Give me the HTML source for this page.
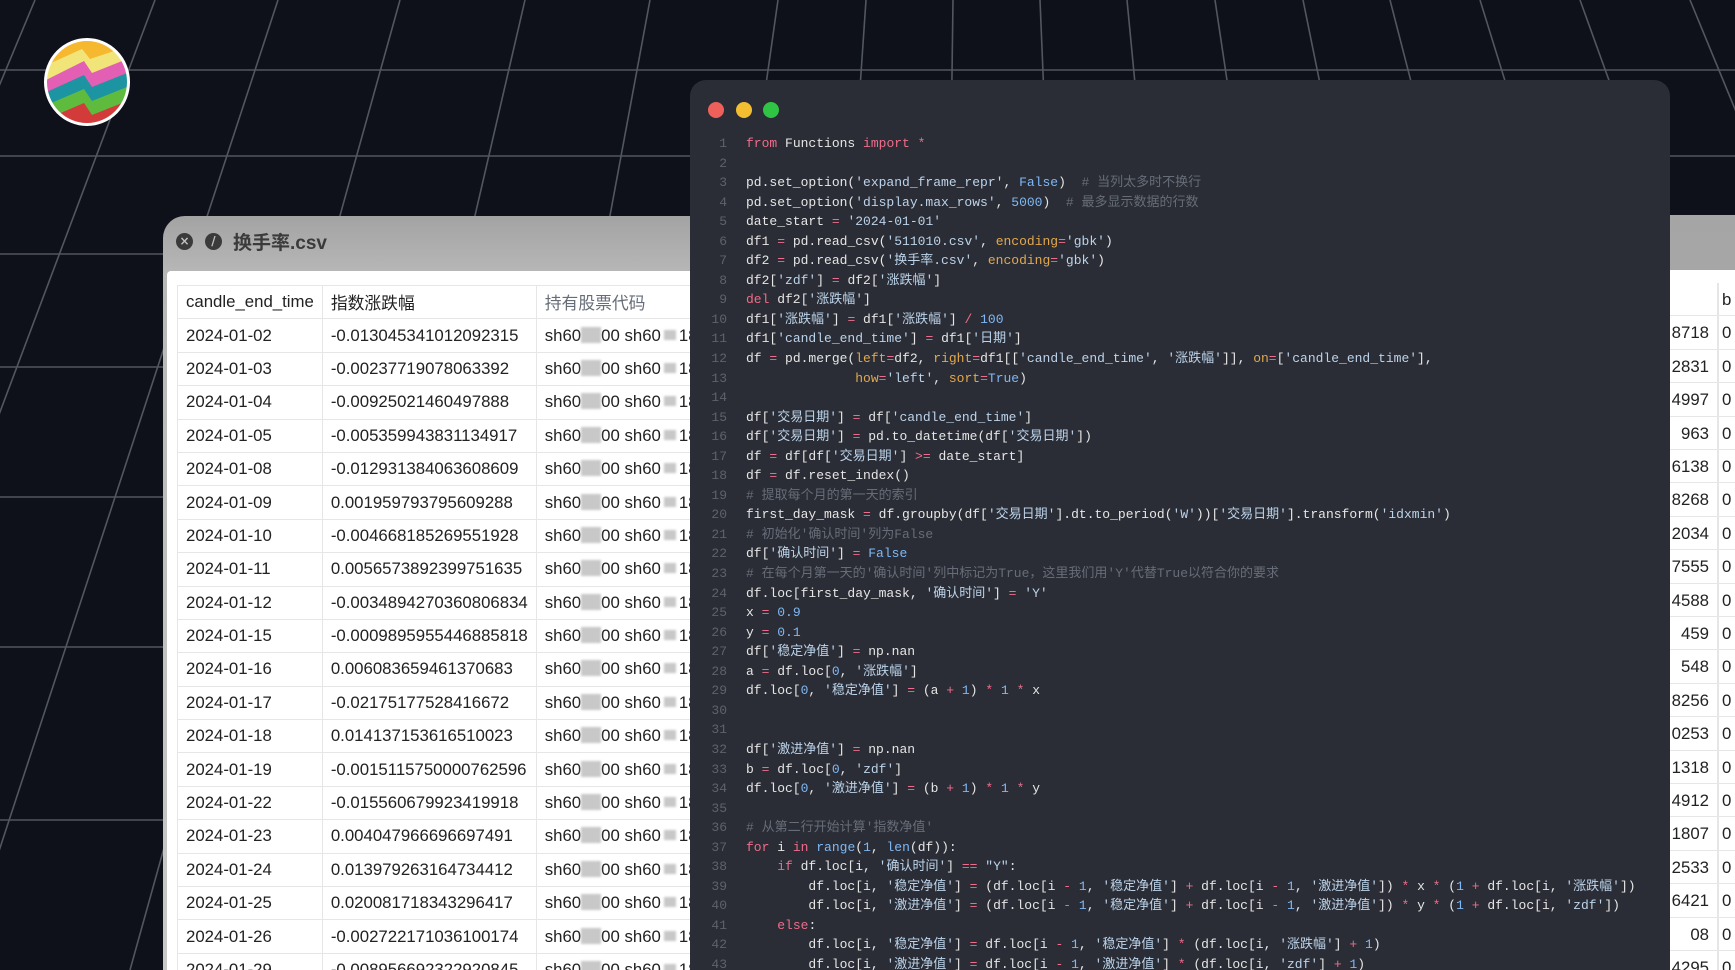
<!DOCTYPE html>
<html><head><meta charset="utf-8"><style>
*{margin:0;padding:0;box-sizing:border-box}
html,body{width:1735px;height:970px;overflow:hidden;background:#0e1119}
body{position:relative}
#bg{position:absolute;left:0;top:0}
.logo{position:absolute;left:42px;top:37px}
.csv{position:absolute;left:163px;top:216px;width:1600px;height:754px;border-radius:22px 0 0 0;background:linear-gradient(#a3a3a3,#b8b8b8 60px,#c8c8c8);overflow:hidden}
.csv .title{position:absolute;left:70px;top:12px;font:bold 19px "Liberation Sans","Noto Sans CJK SC",sans-serif;color:#3b3b3b}
.ic{position:absolute;top:17px;width:17px;height:17px;border-radius:50%;background:#3a3a3a;color:#c0c0c0;font:bold 12px/17px "DejaVu Sans",sans-serif;text-align:center}
.panel{position:absolute;left:4px;top:55px;right:0;bottom:0;background:#fff;border-radius:4px 0 0 0;overflow:hidden}
table{position:absolute;left:10px;top:14px;border-collapse:collapse;font:16.8px "Liberation Sans","Noto Sans CJK SC",sans-serif;color:#222}
td{border:1.5px solid #e6e6e6;height:33.4px;padding:0 8px;white-space:nowrap;color:#222}
td.a{width:120px}td.b{width:200px}td.c{width:400px}
.bl{display:inline-block;width:20px;height:16px;background:#c8c8c8;vertical-align:-2px;filter:blur(1px)}
.bs{display:inline-block;width:12px;height:10px;background:#c8c8c8;vertical-align:1px;margin:0 3px;filter:blur(1px)}
.rt{position:absolute;left:1669px;top:215px;width:66px;height:755px;background:linear-gradient(#a5a5a5,#b5b5b5);overflow:hidden}
.rt .p{position:absolute;left:0;top:55px;right:0;bottom:0;background:#fff}
.rt .row{position:absolute;left:0;width:80px;height:33.4px;border-bottom:1.5px solid #e6e6e6;font:16.8px "Liberation Sans",sans-serif;color:#222;line-height:33px}
.rt .v{position:absolute;right:40px}
.rt .z{position:absolute;left:53px}
.rt .ln{position:absolute;left:48px;top:13px;width:1.5px;height:760px;background:#e6e6e6}
.code{position:absolute;left:690px;top:80px;width:980px;height:890px;background:#2a2d35;border-radius:16px 16px 0 0;overflow:hidden}
.dot{position:absolute;top:22px;width:16px;height:16px;border-radius:50%}
pre{position:absolute;left:0;top:54px;font:13px/19.55px "Liberation Mono","Noto Sans CJK SC",monospace;color:#e6e6e6}
.nm{display:inline-block;width:37px;text-align:right;color:#5d626c;margin-right:19px}
.k{color:#ee6d8a}.s{color:#bcd3ea}.n{color:#7fb8f5}.c{color:#676d78}.p{color:#e3a84c}.o{color:#ee6d8a}
</style></head><body>
<svg id="bg" width="1735" height="970">
<g stroke="#5a5e66" stroke-width="1.6" opacity="0.9">
<line x1="0" y1="70" x2="1735" y2="70"/><line x1="0" y1="156" x2="1735" y2="156"/><line x1="0" y1="254" x2="1735" y2="254"/><line x1="0" y1="367" x2="1735" y2="367"/><line x1="0" y1="497" x2="1735" y2="497"/><line x1="0" y1="647" x2="1735" y2="647"/><line x1="0" y1="820" x2="1735" y2="820"/>
<line x1="35" y1="0" x2="-370" y2="970"/><line x1="155" y1="0" x2="-210" y2="970"/><line x1="278" y1="0" x2="-40" y2="970"/><line x1="400" y1="0" x2="130" y2="970"/><line x1="525" y1="0" x2="300" y2="970"/><line x1="650" y1="0" x2="470" y2="970"/><line x1="778" y1="0" x2="640" y2="970"/><line x1="866" y1="0" x2="800" y2="970"/><line x1="953" y1="0" x2="940" y2="970"/><line x1="1040" y1="0" x2="1080" y2="970"/><line x1="1127" y1="0" x2="1220" y2="970"/><line x1="1215" y1="0" x2="1360" y2="970"/><line x1="1303" y1="0" x2="1500" y2="970"/><line x1="1390" y1="0" x2="1640" y2="970"/><line x1="1480" y1="0" x2="1780" y2="970"/><line x1="1580" y1="0" x2="1930" y2="970"/><line x1="1690" y1="0" x2="2090" y2="970"/>
</g></svg>
<svg class="logo" width="90" height="90" viewBox="0 0 90 90">
<defs><clipPath id="cc"><ellipse cx="45" cy="45" rx="41" ry="42"/></clipPath></defs>
<g clip-path="url(#cc)">
<rect width="90" height="90" fill="#f5b82e"/>
<polygon points="0,30 40,12 48,22 90,8 90,90 0,90" fill="#f1e57a"/>
<polygon points="0,45 42,24 50,36 90,20 90,90 0,90" fill="#e35fb4"/>
<polygon points="0,57 42,38 50,50 90,34 90,90 0,90" fill="#1d94a2"/>
<polygon points="0,70 42,52 50,64 90,48 90,90 0,90" fill="#5fbb3e"/>
<polygon points="0,84 42,66 50,78 90,62 90,90 0,90" fill="#d33a3a"/>
</g>
<ellipse cx="45" cy="45" rx="41.5" ry="42.5" fill="none" stroke="#fff" stroke-width="3"/>
</svg>
<div class="csv">
<div class="ic" style="left:13px">×</div><div class="ic" style="left:42px">/</div>
<div class="title">换手率.csv</div>
<div class="panel">
<table>
<tr><td class="a">candle_end_time</td><td class="b">指数涨跌幅</td><td class="c">持有股票代码</td></tr>
<tr><td>2024-01-02</td><td>-0.013045341012092315</td><td>sh60<span class="bl"></span>00 sh60<span class="bs"></span>18</td></tr>
<tr><td>2024-01-03</td><td>-0.00237719078063392</td><td>sh60<span class="bl"></span>00 sh60<span class="bs"></span>18</td></tr>
<tr><td>2024-01-04</td><td>-0.00925021460497888</td><td>sh60<span class="bl"></span>00 sh60<span class="bs"></span>18</td></tr>
<tr><td>2024-01-05</td><td>-0.005359943831134917</td><td>sh60<span class="bl"></span>00 sh60<span class="bs"></span>18</td></tr>
<tr><td>2024-01-08</td><td>-0.012931384063608609</td><td>sh60<span class="bl"></span>00 sh60<span class="bs"></span>18</td></tr>
<tr><td>2024-01-09</td><td>0.001959793795609288</td><td>sh60<span class="bl"></span>00 sh60<span class="bs"></span>18</td></tr>
<tr><td>2024-01-10</td><td>-0.004668185269551928</td><td>sh60<span class="bl"></span>00 sh60<span class="bs"></span>18</td></tr>
<tr><td>2024-01-11</td><td>0.0056573892399751635</td><td>sh60<span class="bl"></span>00 sh60<span class="bs"></span>18</td></tr>
<tr><td>2024-01-12</td><td>-0.0034894270360806834</td><td>sh60<span class="bl"></span>00 sh60<span class="bs"></span>18</td></tr>
<tr><td>2024-01-15</td><td>-0.0009895955446885818</td><td>sh60<span class="bl"></span>00 sh60<span class="bs"></span>18</td></tr>
<tr><td>2024-01-16</td><td>0.006083659461370683</td><td>sh60<span class="bl"></span>00 sh60<span class="bs"></span>18</td></tr>
<tr><td>2024-01-17</td><td>-0.02175177528416672</td><td>sh60<span class="bl"></span>00 sh60<span class="bs"></span>18</td></tr>
<tr><td>2024-01-18</td><td>0.014137153616510023</td><td>sh60<span class="bl"></span>00 sh60<span class="bs"></span>18</td></tr>
<tr><td>2024-01-19</td><td>-0.0015115750000762596</td><td>sh60<span class="bl"></span>00 sh60<span class="bs"></span>18</td></tr>
<tr><td>2024-01-22</td><td>-0.015560679923419918</td><td>sh60<span class="bl"></span>00 sh60<span class="bs"></span>18</td></tr>
<tr><td>2024-01-23</td><td>0.004047966696697491</td><td>sh60<span class="bl"></span>00 sh60<span class="bs"></span>18</td></tr>
<tr><td>2024-01-24</td><td>0.013979263164734412</td><td>sh60<span class="bl"></span>00 sh60<span class="bs"></span>18</td></tr>
<tr><td>2024-01-25</td><td>0.020081718343296417</td><td>sh60<span class="bl"></span>00 sh60<span class="bs"></span>18</td></tr>
<tr><td>2024-01-26</td><td>-0.002722171036100174</td><td>sh60<span class="bl"></span>00 sh60<span class="bs"></span>18</td></tr>
<tr><td>2024-01-29</td><td>-0.008956692322920845</td><td>sh60<span class="bl"></span>00 sh60<span class="bs"></span>18</td></tr>
</table>
</div></div>
<div class="rt"><div class="p">
<div class="ln"></div>
<div class="row" style="top:13px"><span class="z">b</span></div>
<div class="row" style="top:46.4px"><span class="v">8718</span><span class="z">0</span></div>
<div class="row" style="top:79.8px"><span class="v">2831</span><span class="z">0</span></div>
<div class="row" style="top:113.2px"><span class="v">4997</span><span class="z">0</span></div>
<div class="row" style="top:146.6px"><span class="v">963</span><span class="z">0</span></div>
<div class="row" style="top:180px"><span class="v">6138</span><span class="z">0</span></div>
<div class="row" style="top:213.4px"><span class="v">8268</span><span class="z">0</span></div>
<div class="row" style="top:246.8px"><span class="v">2034</span><span class="z">0</span></div>
<div class="row" style="top:280.2px"><span class="v">7555</span><span class="z">0</span></div>
<div class="row" style="top:313.6px"><span class="v">4588</span><span class="z">0</span></div>
<div class="row" style="top:347px"><span class="v">459</span><span class="z">0</span></div>
<div class="row" style="top:380.4px"><span class="v">548</span><span class="z">0</span></div>
<div class="row" style="top:413.8px"><span class="v">8256</span><span class="z">0</span></div>
<div class="row" style="top:447.2px"><span class="v">0253</span><span class="z">0</span></div>
<div class="row" style="top:480.6px"><span class="v">1318</span><span class="z">0</span></div>
<div class="row" style="top:514px"><span class="v">4912</span><span class="z">0</span></div>
<div class="row" style="top:547.4px"><span class="v">1807</span><span class="z">0</span></div>
<div class="row" style="top:580.8px"><span class="v">2533</span><span class="z">0</span></div>
<div class="row" style="top:614.2px"><span class="v">6421</span><span class="z">0</span></div>
<div class="row" style="top:647.6px"><span class="v">08</span><span class="z">0</span></div>
<div class="row" style="top:681px"><span class="v">4295</span><span class="z">0</span></div>
</div></div>
<div class="code">
<div class="dot" style="left:18px;background:#f0605a"></div>
<div class="dot" style="left:46px;background:#f3be2f"></div>
<div class="dot" style="left:73px;background:#2fc443"></div>
<pre><span class="nm">1</span><span class="k">from</span> Functions <span class="k">import</span> <span class="o">*</span>
<span class="nm">2</span>
<span class="nm">3</span>pd.set_option(<span class="s">'expand_frame_repr'</span>, <span class="n">False</span>)  <span class="c"># 当列太多时不换行</span>
<span class="nm">4</span>pd.set_option(<span class="s">'display.max_rows'</span>, <span class="n">5000</span>)  <span class="c"># 最多显示数据的行数</span>
<span class="nm">5</span>date_start <span class="o">=</span> <span class="s">'2024-01-01'</span>
<span class="nm">6</span>df1 <span class="o">=</span> pd.read_csv(<span class="s">'511010.csv'</span>, <span class="p">encoding</span><span class="o">=</span><span class="s">'gbk'</span>)
<span class="nm">7</span>df2 <span class="o">=</span> pd.read_csv(<span class="s">'换手率.csv'</span>, <span class="p">encoding</span><span class="o">=</span><span class="s">'gbk'</span>)
<span class="nm">8</span>df2[<span class="s">'zdf'</span>] <span class="o">=</span> df2[<span class="s">'涨跌幅'</span>]
<span class="nm">9</span><span class="k">del</span> df2[<span class="s">'涨跌幅'</span>]
<span class="nm">10</span>df1[<span class="s">'涨跌幅'</span>] <span class="o">=</span> df1[<span class="s">'涨跌幅'</span>] <span class="o">/</span> <span class="n">100</span>
<span class="nm">11</span>df1[<span class="s">'candle_end_time'</span>] <span class="o">=</span> df1[<span class="s">'日期'</span>]
<span class="nm">12</span>df <span class="o">=</span> pd.merge(<span class="p">left</span><span class="o">=</span>df2, <span class="p">right</span><span class="o">=</span>df1[[<span class="s">'candle_end_time'</span>, <span class="s">'涨跌幅'</span>]], <span class="p">on</span><span class="o">=</span>[<span class="s">'candle_end_time'</span>],
<span class="nm">13</span>              <span class="p">how</span><span class="o">=</span><span class="s">'left'</span>, <span class="p">sort</span><span class="o">=</span><span class="n">True</span>)
<span class="nm">14</span>
<span class="nm">15</span>df[<span class="s">'交易日期'</span>] <span class="o">=</span> df[<span class="s">'candle_end_time'</span>]
<span class="nm">16</span>df[<span class="s">'交易日期'</span>] <span class="o">=</span> pd.to_datetime(df[<span class="s">'交易日期'</span>])
<span class="nm">17</span>df <span class="o">=</span> df[df[<span class="s">'交易日期'</span>] <span class="o">&gt;=</span> date_start]
<span class="nm">18</span>df <span class="o">=</span> df.reset_index()
<span class="nm">19</span><span class="c"># 提取每个月的第一天的索引</span>
<span class="nm">20</span>first_day_mask <span class="o">=</span> df.groupby(df[<span class="s">'交易日期'</span>].dt.to_period(<span class="s">'W'</span>))[<span class="s">'交易日期'</span>].transform(<span class="s">'idxmin'</span>)
<span class="nm">21</span><span class="c"># 初始化'确认时间'列为False</span>
<span class="nm">22</span>df[<span class="s">'确认时间'</span>] <span class="o">=</span> <span class="n">False</span>
<span class="nm">23</span><span class="c"># 在每个月第一天的'确认时间'列中标记为True，这里我们用'Y'代替True以符合你的要求</span>
<span class="nm">24</span>df.loc[first_day_mask, <span class="s">'确认时间'</span>] <span class="o">=</span> <span class="s">'Y'</span>
<span class="nm">25</span>x <span class="o">=</span> <span class="n">0.9</span>
<span class="nm">26</span>y <span class="o">=</span> <span class="n">0.1</span>
<span class="nm">27</span>df[<span class="s">'稳定净值'</span>] <span class="o">=</span> np.nan
<span class="nm">28</span>a <span class="o">=</span> df.loc[<span class="n">0</span>, <span class="s">'涨跌幅'</span>]
<span class="nm">29</span>df.loc[<span class="n">0</span>, <span class="s">'稳定净值'</span>] <span class="o">=</span> (a <span class="o">+</span> <span class="n">1</span>) <span class="o">*</span> <span class="n">1</span> <span class="o">*</span> x
<span class="nm">30</span>
<span class="nm">31</span>
<span class="nm">32</span>df[<span class="s">'激进净值'</span>] <span class="o">=</span> np.nan
<span class="nm">33</span>b <span class="o">=</span> df.loc[<span class="n">0</span>, <span class="s">'zdf'</span>]
<span class="nm">34</span>df.loc[<span class="n">0</span>, <span class="s">'激进净值'</span>] <span class="o">=</span> (b <span class="o">+</span> <span class="n">1</span>) <span class="o">*</span> <span class="n">1</span> <span class="o">*</span> y
<span class="nm">35</span>
<span class="nm">36</span><span class="c"># 从第二行开始计算'指数净值'</span>
<span class="nm">37</span><span class="k">for</span> i <span class="k">in</span> <span class="n">range</span>(<span class="n">1</span>, <span class="n">len</span>(df)):
<span class="nm">38</span>    <span class="k">if</span> df.loc[i, <span class="s">'确认时间'</span>] <span class="o">==</span> <span class="s">"Y"</span>:
<span class="nm">39</span>        df.loc[i, <span class="s">'稳定净值'</span>] <span class="o">=</span> (df.loc[i <span class="o">-</span> <span class="n">1</span>, <span class="s">'稳定净值'</span>] <span class="o">+</span> df.loc[i <span class="o">-</span> <span class="n">1</span>, <span class="s">'激进净值'</span>]) <span class="o">*</span> x <span class="o">*</span> (<span class="n">1</span> <span class="o">+</span> df.loc[i, <span class="s">'涨跌幅'</span>])
<span class="nm">40</span>        df.loc[i, <span class="s">'激进净值'</span>] <span class="o">=</span> (df.loc[i <span class="o">-</span> <span class="n">1</span>, <span class="s">'稳定净值'</span>] <span class="o">+</span> df.loc[i <span class="o">-</span> <span class="n">1</span>, <span class="s">'激进净值'</span>]) <span class="o">*</span> y <span class="o">*</span> (<span class="n">1</span> <span class="o">+</span> df.loc[i, <span class="s">'zdf'</span>])
<span class="nm">41</span>    <span class="k">else</span>:
<span class="nm">42</span>        df.loc[i, <span class="s">'稳定净值'</span>] <span class="o">=</span> df.loc[i <span class="o">-</span> <span class="n">1</span>, <span class="s">'稳定净值'</span>] <span class="o">*</span> (df.loc[i, <span class="s">'涨跌幅'</span>] <span class="o">+</span> <span class="n">1</span>)
<span class="nm">43</span>        df.loc[i, <span class="s">'激进净值'</span>] <span class="o">=</span> df.loc[i <span class="o">-</span> <span class="n">1</span>, <span class="s">'激进净值'</span>] <span class="o">*</span> (df.loc[i, <span class="s">'zdf'</span>] <span class="o">+</span> <span class="n">1</span>)
</pre>
</div>
</body></html>
